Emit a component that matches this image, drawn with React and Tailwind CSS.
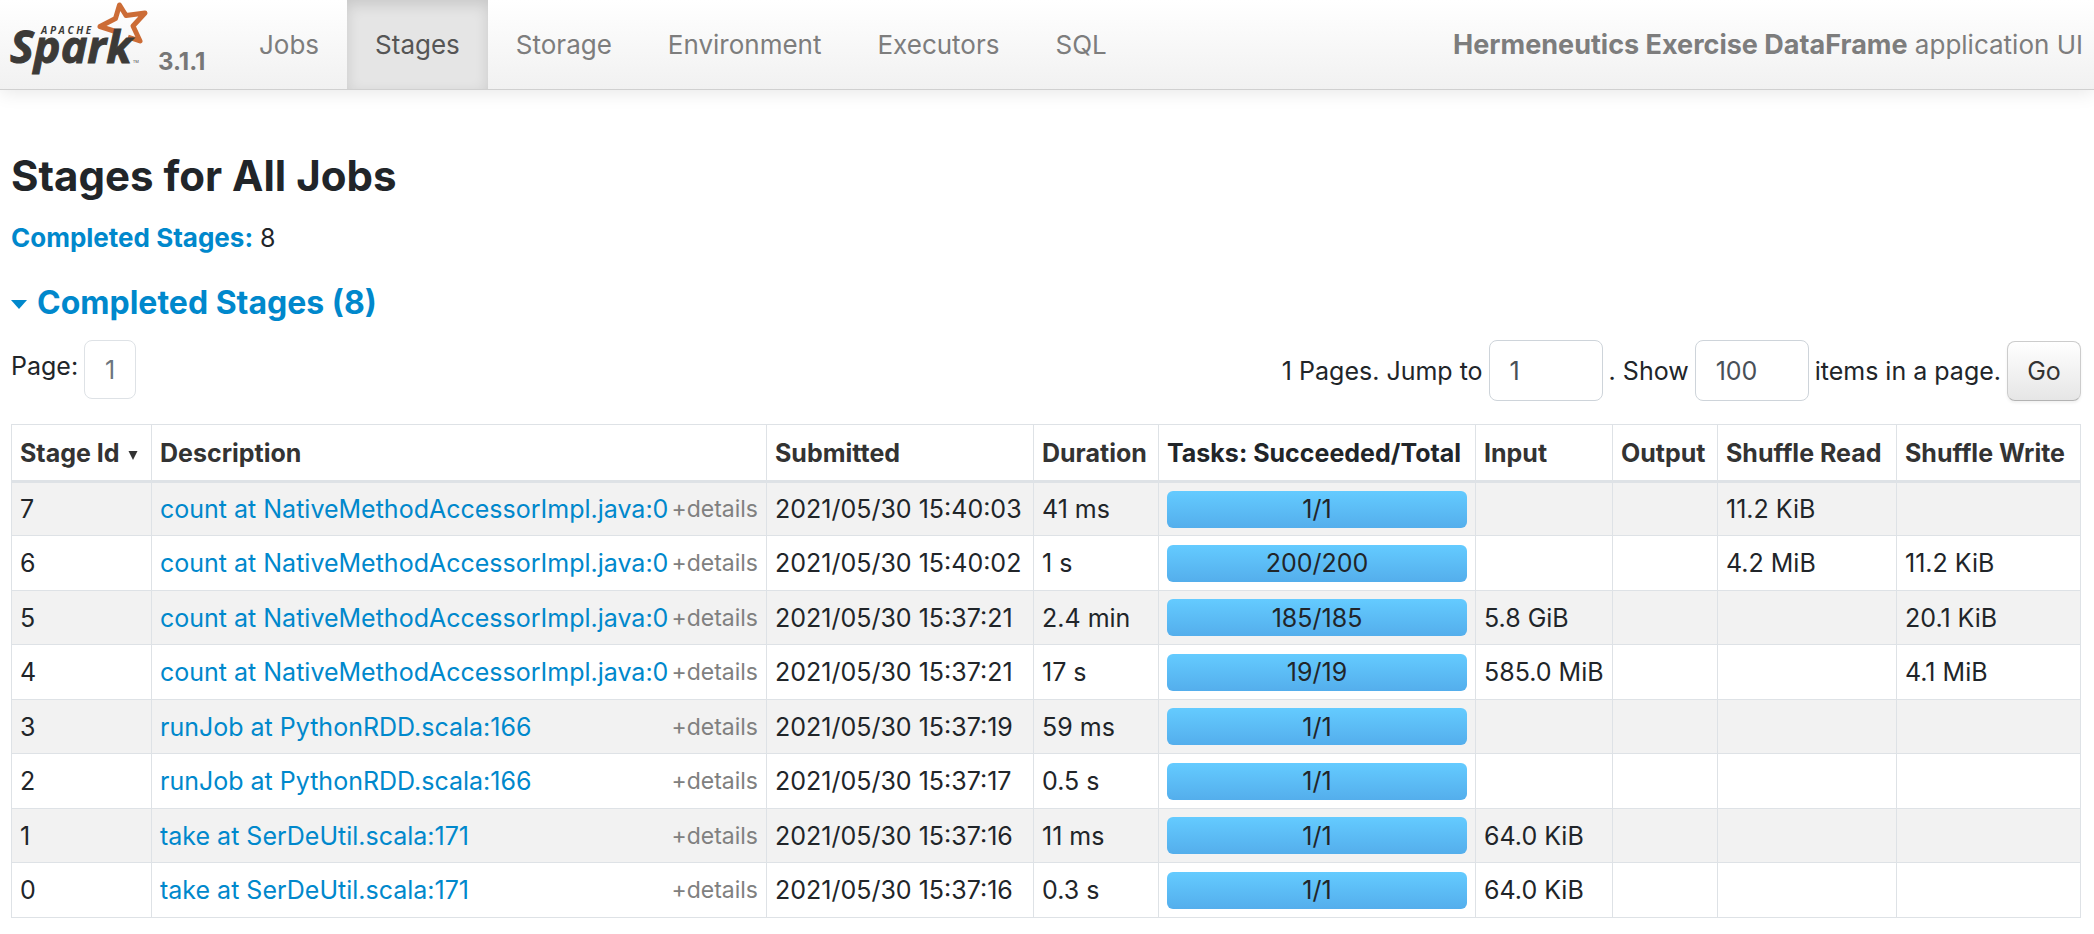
import React from "react";

const navItems = ["Jobs", "Stages", "Storage", "Environment", "Executors", "SQL"];

const columns = [
  { label: "Stage Id", width: "w-[140px]", sorted: true },
  { label: "Description", width: "" },
  { label: "Submitted", width: "w-[267px]" },
  { label: "Duration", width: "w-[125px]" },
  { label: "Tasks: Succeeded/Total", width: "w-[317px]", plain: true },
  { label: "Input", width: "w-[137px]" },
  { label: "Output", width: "w-[105px]" },
  { label: "Shuffle Read", width: "w-[179px]" },
  { label: "Shuffle Write", width: "w-[184px]" },
];

const count = "count at NativeMethodAccessorImpl.java:0";
const runJob = "runJob at PythonRDD.scala:166";
const take = "take at SerDeUtil.scala:171";

const stages = [
  { id: 7, desc: count, submitted: "2021/05/30 15:40:03", duration: "41 ms", tasks: "1/1", input: "", read: "11.2 KiB", write: "" },
  { id: 6, desc: count, submitted: "2021/05/30 15:40:02", duration: "1 s", tasks: "200/200", input: "", read: "4.2 MiB", write: "11.2 KiB" },
  { id: 5, desc: count, submitted: "2021/05/30 15:37:21", duration: "2.4 min", tasks: "185/185", input: "5.8 GiB", read: "", write: "20.1 KiB" },
  { id: 4, desc: count, submitted: "2021/05/30 15:37:21", duration: "17 s", tasks: "19/19", input: "585.0 MiB", read: "", write: "4.1 MiB" },
  { id: 3, desc: runJob, submitted: "2021/05/30 15:37:19", duration: "59 ms", tasks: "1/1", input: "", read: "", write: "" },
  { id: 2, desc: runJob, submitted: "2021/05/30 15:37:17", duration: "0.5 s", tasks: "1/1", input: "", read: "", write: "" },
  { id: 1, desc: take, submitted: "2021/05/30 15:37:16", duration: "11 ms", tasks: "1/1", input: "64.0 KiB", read: "", write: "" },
  { id: 0, desc: take, submitted: "2021/05/30 15:37:16", duration: "0.3 s", tasks: "1/1", input: "64.0 KiB", read: "", write: "" },
];

function SparkLogo() {
  return (
    <svg width="150" height="84" viewBox="0 0 150 84" role="img" aria-label="Apache Spark" className="shrink-0">
      <path
        d="M114 31 L100 26.500 L115.500 18.500 L119.500 5 L126 15.500 L145 13 L133 26 L140 41 L128 37"
        fill="none"
        stroke="#cc6c36"
        strokeWidth="5"
        strokeLinejoin="round"
      />
      <g fill="#3c3a37" fontFamily="Open Sans, sans-serif">
        <text x="41" y="34" fontSize="10" fontWeight="700" fontStyle="italic">
          A P A C H E
        </text>
        <text x="10" y="63" fontSize="45" fontWeight="700" fontStyle="italic" stroke="#3c3a37" strokeWidth="1">
          Spark
        </text>
        <text x="133" y="63" fontSize="4">
          TM
        </text>
      </g>
    </svg>
  );
}

function Navbar() {
  return (
    <header className="flex h-[90px] items-stretch border-b border-[#d0d0d0] bg-gradient-to-b from-white to-[#f1f1f1] pr-[11px] text-[26px] leading-9 text-[#7d7d7d] shadow-[0_2px_18px_rgba(0,0,0,0.1)]">
      <a href="#home" className="flex w-[231px] shrink-0 items-start">
        <SparkLogo />
        <span className="pt-[46px] pl-2 text-[24px] leading-8 font-bold text-[#777]">3.1.1</span>
      </a>
      <nav className="flex grow">
        {navItems.map((item) => (
          <a
            key={item}
            href={"#" + item.toLowerCase()}
            aria-current={item === "Stages" ? "page" : undefined}
            className={
              item === "Stages"
                ? "flex items-center bg-[#e5e5e5] px-7 text-[#555] shadow-[inset_0_5px_14px_rgba(0,0,0,0.125)]"
                : "flex items-center px-7"
            }
          >
            {item}
          </a>
        ))}
      </nav>
      <p className="self-center whitespace-nowrap">
        <strong className="text-[27px] font-bold">Hermeneutics Exercise DataFrame</strong> application UI
      </p>
    </header>
  );
}

function Pagination() {
  const field =
    "h-[61px] w-[114px] rounded-lg border border-[#ced4da] bg-white px-5 text-[#495057]";
  return (
    <div className="flex items-start justify-between whitespace-nowrap">
      <div className="flex items-start gap-[6px]">
        <span className="pt-2">Page:</span>
        <a
          href="#page-1"
          className="flex h-[59px] w-[52px] items-center justify-center rounded-lg border border-[#dee2e6] text-[#6c757d]"
        >
          1
        </a>
      </div>
      <form className="flex items-center gap-[6px]" onSubmit={(e) => e.preventDefault()}>
        <label htmlFor="jump">1 Pages. Jump to</label>
        <input id="jump" type="text" defaultValue="1" className={field} />
        <label htmlFor="size">. Show</label>
        <input id="size" type="text" defaultValue="100" className={field} />
        <span>items in a page.</span>
        <button
          type="submit"
          className="h-[60px] w-[74px] rounded-lg border border-[#ccc] border-b-[#b3b3b3] bg-gradient-to-b from-white to-[#e6e6e6] text-[#333] shadow-[0_2px_3px_rgba(0,0,0,0.06)]"
        >
          Go
        </button>
      </form>
    </div>
  );
}

function StageTable() {
  const cell = "border border-[#dee2e6] px-2 py-0";
  return (
    <table className="mt-[23px] w-full table-fixed border-collapse text-left whitespace-nowrap">
      <thead>
        <tr className="h-[57px]">
          {columns.map((c) => (
            <th
              key={c.label}
              scope="col"
              className={"border border-b-[3px] border-[#dee2e6] px-2 py-0 font-bold " + c.width}
            >
              {c.plain ? (
                c.label
              ) : (
                <a href="#sort" className="text-[#333]">
                  {c.label}
                  {c.sorted && (
                    <svg width="10" height="10" viewBox="0 0 10 10" className="ml-2 inline-block" aria-hidden="true">
                      <path d="M0.500 1h9L5 10z" fill="#333" />
                    </svg>
                  )}
                </a>
              )}
            </th>
          ))}
        </tr>
      </thead>
      <tbody>
        {stages.map((s) => (
          <tr key={s.id} className="odd:h-[54px] odd:bg-[#f2f2f2] even:h-[55px]">
            <td className={cell}>{s.id}</td>
            <td className={cell}>
              <div className="flex justify-between">
                <a href={"#stage-" + s.id} className="text-[#0088cc]">
                  {s.desc}
                </a>
                <button type="button" className="text-[23px] text-[#808080]">
                  +details
                </button>
              </div>
            </td>
            <td className={cell}>{s.submitted}</td>
            <td className={cell}>{s.duration}</td>
            <td className={cell}>
              <div className="flex h-[37px] items-center justify-center rounded-md bg-gradient-to-b from-[#64cbff] to-[#54aeec]">
                {s.tasks}
              </div>
            </td>
            <td className={cell}>{s.input}</td>
            <td className={cell}></td>
            <td className={cell}>{s.read}</td>
            <td className={cell}>{s.write}</td>
          </tr>
        ))}
      </tbody>
    </table>
  );
}

export default function App() {
  return (
    <div className="min-h-screen bg-white font-['Inter','Liberation_Sans',sans-serif] text-[25px] leading-9 text-[#212529]">
      <Navbar />
      <main className="pt-[58px] pr-[13px] pb-3 pl-[11px]">
        <h1 className="text-[42px] leading-[56px] font-bold">Stages for All Jobs</h1>
        <p className="mt-4">
          <a href="#completed" className="text-[26px] font-bold text-[#0088cc]">
            Completed Stages:
          </a>{" "}
          8
        </p>
        <h2 id="completed" className="mt-[27px] mb-[17px] text-[32px] leading-10 font-bold text-[#0088cc]">
          <button type="button" className="flex items-center gap-[10px]">
            <svg width="16" height="12" viewBox="0 0 16 12" aria-hidden="true">
              <path d="M0 3h16L8 12z" fill="#0088cc" />
            </svg>
            Completed Stages (8)
          </button>
        </h2>
        <Pagination />
        <StageTable />
      </main>
    </div>
  );
}
